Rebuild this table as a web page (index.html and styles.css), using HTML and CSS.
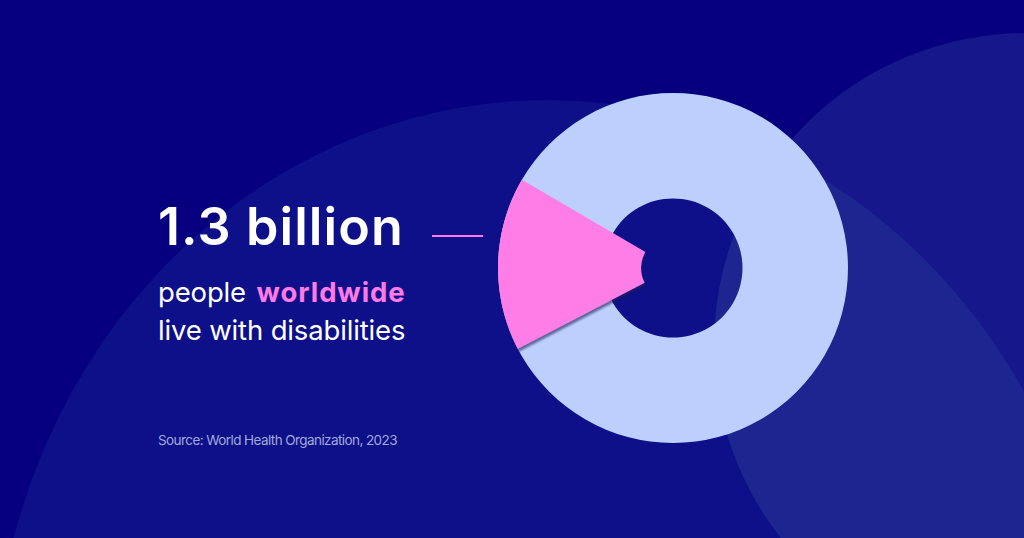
FILE: index.html
```html
<!DOCTYPE html>
<html lang="en">
<head>
<meta charset="utf-8">
<title>1.3 billion people worldwide live with disabilities</title>
<link rel="stylesheet" href="styles.css">
</head>
<body>
<main class="poster">
  <svg class="backdrop" viewBox="0 0 1024 538" aria-hidden="true">
    <defs>
      <clipPath id="clip-left">
        <ellipse cx="548" cy="700" rx="555" ry="600"/>
      </clipPath>
    </defs>
    <ellipse class="shape-left" cx="548" cy="700" rx="555" ry="600"/>
    <circle class="shape-right" cx="1026" cy="345" r="312"/>
    <circle class="shape-overlap" cx="1026" cy="345" r="312" clip-path="url(#clip-left)"/>
  </svg>

  <section class="copy">
    <h1 class="headline">1.3 billion</h1>
    <p class="lead">people <strong class="accent">worldwide</strong><br>live with disabilities</p>
    <p class="source">Source: World Health Organization, 2023</p>
  </section>

  <span class="connector"></span>

  <svg class="chart" viewBox="0 0 352 352" aria-label="Donut chart: about 16% of the world population">
    <defs>
      <filter id="slice-shadow" x="-30%" y="-30%" width="160%" height="160%">
        <feDropShadow dx="1" dy="3" stdDeviation="1.2" flood-color="#1c2258" flood-opacity="0.6"/>
      </filter>
    </defs>
    <path class="ring" fill-rule="evenodd"
      d="M176 1 A175 175 0 1 1 175.99 1 Z M176 106.5 A69.5 69.5 0 1 0 176.01 106.5 Z"/>
    <path class="slice" filter="url(#slice-shadow)"
      d="M24.9 87.7 A175 175 0 0 0 20.8 256.8 L147.6 190.8 A32 32 0 0 1 148.4 159.9 Z"/>
  </svg>
</main>
</body>
</html>
```
FILE: styles.css
```css
* {
  box-sizing: border-box;
}

html,
body {
  margin: 0;
  padding: 0;
  background: #06007e;
}

.poster {
  position: relative;
  width: 1024px;
  height: 538px;
  overflow: hidden;
  display: flex;
  align-items: flex-start;
  padding-left: 158px;
  background: #06007e;
  font-family: Inter, "Liberation Sans", sans-serif;
  color: #ffffff;
}

.backdrop {
  position: absolute;
  left: 0;
  top: 0;
  width: 1024px;
  height: 538px;
  z-index: 0;
}

.shape-left {
  fill: #0d1088;
}

.shape-right {
  fill: #15178a;
}

.shape-overlap {
  fill: #1d2590;
}

.copy {
  position: relative;
  z-index: 1;
  width: 274px;
  margin-top: 201px;
  display: flex;
  flex-direction: column;
}

.headline {
  margin: 0;
  font-size: 52px;
  line-height: 52px;
  font-weight: 600;
  letter-spacing: 1.1px;
  white-space: nowrap;
}

.lead {
  margin: 21px 0 0;
  font-size: 27.5px;
  line-height: 37.6px;
  font-weight: 400;
  letter-spacing: -0.15px;
  white-space: nowrap;
}

.accent {
  margin-left: 3px;
  font-weight: 700;
  letter-spacing: 0.9px;
  color: #ff7ae6;
}

.source {
  margin: 82px 0 0;
  font-size: 13.5px;
  line-height: 18px;
  letter-spacing: -0.58px;
  color: #a3a9dc;
  white-space: nowrap;
}

.connector {
  position: relative;
  z-index: 1;
  width: 51px;
  height: 2px;
  margin-top: 235px;
  background: #ff7ae6;
}

.chart {
  position: relative;
  z-index: 1;
  width: 352px;
  height: 352px;
  margin-left: 13.5px;
  margin-top: 92px;
  overflow: visible;
}

.ring {
  fill: #bdd0fd;
}

.slice {
  fill: #ff7de6;
}
```
